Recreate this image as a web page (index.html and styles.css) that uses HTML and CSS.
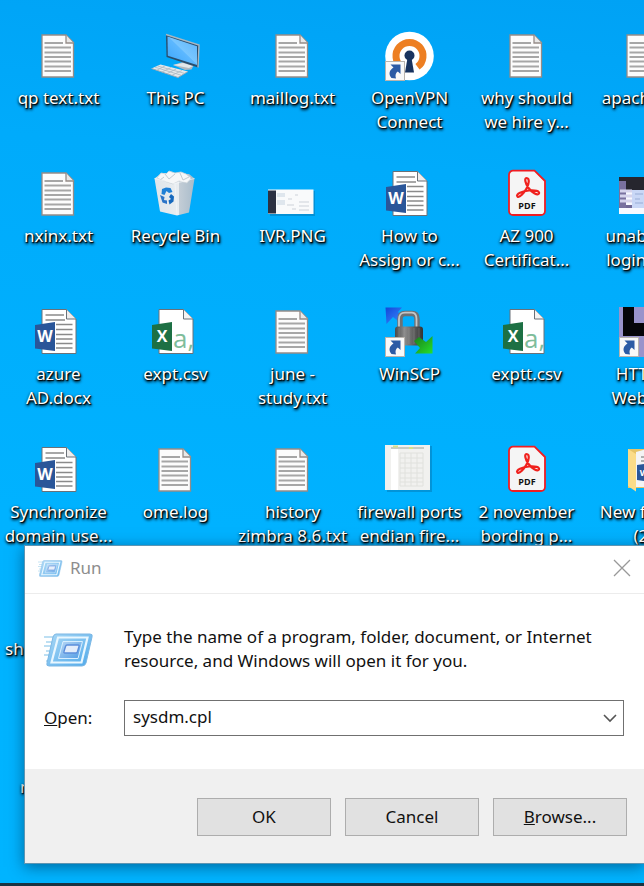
FILE: index.html
```html
<!DOCTYPE html>
<html lang="en">
<head>
<meta charset="utf-8">
<title>Desktop</title>
<link rel="stylesheet" href="styles.css">
</head>
<body>
<svg class="defs" aria-hidden="true">
  <defs>
    <linearGradient id="screen" x1="0" y1="1" x2="1" y2="0"><stop offset="0" stop-color="#3aa5fa"/><stop offset=".5" stop-color="#5db8ff"/><stop offset=".52" stop-color="#78c6ff"/><stop offset="1" stop-color="#5ab4fb"/></linearGradient>
    <linearGradient id="bin" x1="0" y1="0" x2="1" y2="0"><stop offset="0" stop-color="#dfe5ea"/><stop offset=".6" stop-color="#e9edf0"/><stop offset=".62" stop-color="#c3cdd6"/><stop offset="1" stop-color="#a9bccb"/></linearGradient>
    <linearGradient id="metal" x1="0" y1="0" x2="1" y2="0"><stop offset="0" stop-color="#4b4b4b"/><stop offset=".35" stop-color="#8b8b8b"/><stop offset=".6" stop-color="#686868"/><stop offset="1" stop-color="#333"/></linearGradient>
    <linearGradient id="blue" x1="0" y1="0" x2="1" y2="1"><stop offset="0" stop-color="#1247d8"/><stop offset="1" stop-color="#3b8bff"/></linearGradient>
    <linearGradient id="green" x1="0" y1="0" x2="1" y2="1"><stop offset="0" stop-color="#1b7d1b"/><stop offset="1" stop-color="#25e02c"/></linearGradient>
    <linearGradient id="frame" x1="0" y1="0" x2="1" y2="1"><stop offset="0" stop-color="#a9d8f6"/><stop offset="1" stop-color="#4fa9ea"/></linearGradient>
    <linearGradient id="pane" x1="0" y1="0" x2="1" y2="1"><stop offset="0" stop-color="#b9d8f5"/><stop offset="1" stop-color="#4f9be4"/></linearGradient>
    <symbol id="arrow" viewBox="0 0 20 20">
      <rect x=".5" y=".5" width="19" height="19" fill="#f9f9f9" stroke="#b9b4ae"/>
      <path d="M5.500 3.500H15.500V13L12.800 10.500C10.500 12 10 14.500 11 17.500L6.500 17C3 13 4.500 9 8.500 6.500Z" fill="#2c5ba5"/>
    </symbol>
    <symbol id="txt" viewBox="0 0 49 48">
      <path d="M8 4H32L39.500 11.500V46H8Z" fill="#fcfcfc" stroke="#958c88" stroke-width="1.300"/>
      <path d="M32 4V12H39.500" fill="#e8e8e8" stroke="#958c88" stroke-width="1.300"/>
      <path d="M10.500 12H29M10.500 16.500H37M10.500 21.500H37M10.500 26H37M10.500 30.500H37M10.500 35.500H37M10.500 40H37" stroke="#a6a6a6" stroke-width="1.900"/>
    </symbol>
    <symbol id="pc" viewBox="0 0 49 48">
      <path d="M22 34 32 31 43 34 40.500 38.500 34 39Z" fill="#aeb8c1"/>
      <path d="M22 34 32 32 42 35 38 37Z" fill="#e3e7ea"/>
      <path d="M15 3.500 48 14 47 36.500 15.500 26Z" fill="#2a4d6c"/>
      <path d="M16.500 5.500 46 15.200V34L16.800 24.700Z" fill="url(#screen)"/>
      <path d="M15 3.500 48 14 47 36.500" fill="none" stroke="#a8b7c2" stroke-width="1.400"/>
      <path d="M.5 37.500 9.500 33.500 37 40.500 27 46.500Z" fill="#e4e8eb"/>
      <path d="M.5 37.500 27 46.500 37 40.500" fill="none" stroke="#9aa9b5"/>
      <path d="M4 36.200 30 44.200M6.500 35 34 42.500M6 39.200 14 34.800M11 41 20 36.500M16 42.700 25 38M21 44.300 31 39.500" stroke="#aab7c1" stroke-width=".8"/>
    </symbol>
    <symbol id="vpn" viewBox="0 0 49 50">
      <circle cx="24.500" cy="25" r="24.300" fill="#fff"/>
      <path d="M16.500 35.800A13.500 13.500 0 1 1 32.500 35.800" fill="none" stroke="#ed7f22" stroke-width="7"/>
      <circle cx="24.500" cy="24.500" r="5" fill="#18335f"/>
      <path d="M22.500 27H26.500L29 41.500H20Z" fill="#18335f"/>
      <use href="#arrow" x="0" y="30" width="20" height="20"/>
    </symbol>
    <symbol id="recycle" viewBox="0 0 49 48">
      <path d="M3.500 9.500 11 4 38 5 43.500 9.500 38 43.500 26 46.500 9 42.500Z" fill="url(#bin)"/>
      <path d="M6 9 10 4 15 5 18 2 24 4 30 3 35 5 40 9 36 14 28 12 22 15 13 12Z" fill="#f6f7f8" stroke="#cbd3d9" stroke-width=".8"/>
      <path d="M14 5 18 10 24 5M29 4 32 11 38 8M9 11 13 8" fill="none" stroke="#c1cad1"/>
      <path d="M3.500 9.500 24 14.500 43.500 9.500M24 14.500 26 46" fill="none" stroke="#f7fafc" stroke-opacity=".6"/>
      <path d="M10.500 25 11 20 15 18.500 19.500 19 21.500 23 18 24 15.500 22 13.500 26Z" fill="#1f80d6"/>
      <path d="M9 26 13.500 28 13 31 16 31.500V35L11.500 33.500Z" fill="#2b74c8"/>
      <path d="M20 25 23 27.500 22.500 32.500 18.500 35.500 17.500 31.500 20 30 18 28Z" fill="#1669bd"/>
    </symbol>
    <symbol id="ivr" viewBox="0 0 49 48">
      <path d="M2 22H47V47H2Z" fill="#075f91" opacity=".35"/>
      <path d="M0 20.500H45.500V45H0Z" fill="#f9fafb"/>
      <path d="M0 21.500H8V44.500H0Z" fill="#2c3142"/>
      <path d="M9 24H17V28H9ZM9 31H17V36H9Z" fill="#dfe6ed"/>
      <path d="M20 30H24M27 26H30M19 36H26M31 33H41M31 37H41M31 41H41M24 40H28" stroke="#dbe0e5" stroke-width="1.500"/>
    </symbol>
    <symbol id="word" viewBox="0 0 49 48">
      <path d="M8 2.500H32.500L42 12V46.500H8Z" fill="#fff" stroke="#6b7178"/>
      <path d="M32.500 2.500V12H42" fill="#eee" stroke="#6b7178"/>
      <path d="M11.500 8H30M11.500 13H31M22 17.500H38.500M22 22.500H38.500M22 27.500H38.500M22 32H38.500M22 36.500H38.500M22 41H38.500" stroke="#8a8a8a" stroke-width="1.400"/>
      <path d="M1 18 21 15V44L1 41.500Z" fill="#2a5699"/>
      <text x="11" y="35" class="badge-letter">W</text>
    </symbol>
    <symbol id="csv" viewBox="0 0 49 48">
      <path d="M8 2.500H32.500L42 12V46.500H8Z" fill="#fff" stroke="#6b7178"/>
      <path d="M32.500 2.500V12H42" fill="#f4f4f4" stroke="#6b7178"/>
      <path d="M1 18 21 15V44L1 41.500Z" fill="#1d7044"/>
      <text x="11" y="35" class="badge-letter">X</text>
      <text x="22" y="41" class="csv-letter">a,</text>
    </symbol>
    <symbol id="pdf" viewBox="0 0 49 48">
      <path d="M11 1.700H32.500L43 12V42A4 4 0 0 1 39 46H11A4 4 0 0 1 7 42V5.700A4 4 0 0 1 11 1.700Z" fill="#f5f5f5" stroke="#f01d22" stroke-width="1.800"/>
      <path d="M24.500 9C28 9 27 15 24.500 19.500 22 24 17.500 29 15.500 27.500 13 25 21 22 27 21.500 33 21 38 22 37 24.500 35.500 27 29.500 23 26.500 19 23.500 15 22 9 24.500 9Z" fill="none" stroke="#f0211d" stroke-width="2.200"/>
      <text x="25" y="40" class="pdf-letters">PDF</text>
    </symbol>
    <symbol id="winscp" viewBox="0 0 49 50">
      <path d="M.5 .5H17L13 5 18 10 13 14 8 10 1.500 17Z" fill="url(#blue)"/>
      <path d="M15 21V12Q15 6.500 20 6.500H27Q32 6.500 32 12V21" fill="none" stroke="#6d7174" stroke-width="5.500"/>
      <path d="M14 21V12Q14 5.700 20 5.700H27Q31.500 6 31.500 12V20" fill="none" stroke="#c3c6c8" stroke-width="1.800"/>
      <rect x="10" y="19.500" width="28" height="19" rx="3" fill="url(#metal)"/>
      <path d="M14 21V37M19 21V37M24 21V37M29 21V37M34 21V37" stroke="#aaa" stroke-opacity=".3"/>
      <path d="M29 34 34 30 41 35 47.500 29V46.500H30L35 41Z" fill="url(#green)"/>
      <use href="#arrow" x="0" y="30" width="20" height="20"/>
    </symbol>
    <symbol id="shot" viewBox="0 0 49 48">
      <path d="M0 8H49V45H0Z" fill="#f8f9ff"/>
      <path d="M0 8H49V21H7V12H0Z" fill="#26262e"/>
      <path d="M0 12H7V39H0Z" fill="#79719f"/>
      <path d="M1 22H13M1 27H13M1 32H13" stroke="#d5d3ec" stroke-width="3"/>
      <path d="M13 21H49V39H13Z" fill="#c9d7f6"/>
      <path d="M16 25H24M16 30H21M16 34H24" stroke="#99add6"/>
      <path d="M7 36H13V39H7Z" fill="#716996"/>
    </symbol>
    <symbol id="http" viewBox="0 0 49 50">
      <path d="M0 0H49V50H0Z" fill="#9993cb"/>
      <path d="M4 0H15V16H49V29H4Z" fill="#050509"/>
      <use href="#arrow" x="0" y="30" width="20" height="20"/>
    </symbol>
    <symbol id="sheet" viewBox="0 0 49 48">
      <path d="M2 1H47V47H2Z" fill="#075f91" opacity=".35"/>
      <path d="M0 0H45V45H0Z" fill="#f1f1ef"/>
      <path d="M6 4H13V45H6Z" fill="#fff"/>
      <path d="M6 3H39" stroke="#b9bdb6" stroke-width="1.500"/>
      <path d="M8 1.500H13M24 3H28" stroke="#d3e08e" stroke-width="2"/>
      <path d="M15 8H38V41H15ZM20 8V41M26 8V41M32 8V41M15 13H38M15 18H38M15 23H38M15 28H38M15 33H38M15 37H38" fill="none" stroke="#e0e1dd"/>
    </symbol>
    <symbol id="folder" viewBox="0 0 49 48">
      <path d="M9 4H45V43H9Z" fill="#e7c467"/>
      <path d="M17 7 32 3V42H17Z" fill="#f3f4f5"/>
      <path d="M22 12H49M22 16H49" stroke="#999" stroke-width="1.500"/>
      <path d="M18 20 31 18V37L18 35Z" fill="#2a5699"/>
      <text x="25" y="31" class="folder-letter">W</text>
      <path d="M9 4 17 9V46.500L9 41Z" fill="#fbdc88"/>
    </symbol>
    <symbol id="run" viewBox="0 -2 50 36">
      <path d="M0 4H10M2 9H9M0 13H8M2 18H7M0 22H6M2 28H5" stroke="#a8d5ef" stroke-width="1.500"/>
      <path d="M12 1H46Q49 1 48 4L42 30Q41 33 38 33H5Q2 33 3 30L9 4Q10 1 12 1Z" fill="url(#frame)" stroke="#7cb7e4"/>
      <path d="M14 4.500H43.500L37.500 29.500H7.500Z" fill="none" stroke="#e9f7ff" stroke-width="2.200"/>
      <path d="M19 8.500H38.500L34 25.500H14.500Z" fill="url(#pane)" stroke="#d8efff"/>
      <path d="M23 12H34Q35.500 12 35 13.500L33.500 18.500Q33 20 32 20H21Q19.500 20 20 18.500L21.500 13.500Q22 12 23 12Z" fill="#e3edfb" stroke="#5c8edb" stroke-width="1.400"/>
    </symbol>
  </defs>
</svg>

<main class="desktop">
  <div class="icons">
    <div class="item"><svg class="icon"><use href="#txt"/></svg><span>qp text.txt</span></div>
    <div class="item"><svg class="icon"><use href="#pc"/></svg><span>This PC</span></div>
    <div class="item"><svg class="icon"><use href="#txt"/></svg><span>maillog.txt</span></div>
    <div class="item"><svg class="icon" viewBox="0 0 49 48"><use href="#vpn" width="49" height="50"/></svg><span>OpenVPN<br>Connect</span></div>
    <div class="item"><svg class="icon"><use href="#txt"/></svg><span>why should<br>we hire y...</span></div>
    <div class="item"><svg class="icon"><use href="#txt"/></svg><span>apache.txt</span></div>

    <div class="item"><svg class="icon"><use href="#txt"/></svg><span>nxinx.txt</span></div>
    <div class="item"><svg class="icon"><use href="#recycle"/></svg><span>Recycle Bin</span></div>
    <div class="item"><svg class="icon"><use href="#ivr"/></svg><span>IVR.PNG</span></div>
    <div class="item"><svg class="icon"><use href="#word"/></svg><span>How to<br>Assign or c...</span></div>
    <div class="item"><svg class="icon"><use href="#pdf"/></svg><span>AZ 900<br>Certificat...</span></div>
    <div class="item"><svg class="icon"><use href="#shot"/></svg><span>unable to<br>login to...</span></div>

    <div class="item"><svg class="icon"><use href="#word"/></svg><span>azure<br>AD.docx</span></div>
    <div class="item"><svg class="icon"><use href="#csv"/></svg><span>expt.csv</span></div>
    <div class="item"><svg class="icon"><use href="#txt"/></svg><span>june -<br>study.txt</span></div>
    <div class="item"><svg class="icon" viewBox="0 0 49 48"><use href="#winscp" width="49" height="50"/></svg><span>WinSCP</span></div>
    <div class="item"><svg class="icon"><use href="#csv"/></svg><span>exptt.csv</span></div>
    <div class="item"><svg class="icon" viewBox="0 0 49 48"><use href="#http" width="49" height="50"/></svg><span>HTTrac<br>Website</span></div>

    <div class="item"><svg class="icon"><use href="#word"/></svg><span>Synchronize<br>domain use...</span></div>
    <div class="item"><svg class="icon"><use href="#txt"/></svg><span>ome.log</span></div>
    <div class="item"><svg class="icon"><use href="#txt"/></svg><span>history<br>zimbra 8.6.txt</span></div>
    <div class="item"><svg class="icon"><use href="#sheet"/></svg><span>firewall ports<br>endian fire...</span></div>
    <div class="item"><svg class="icon"><use href="#pdf"/></svg><span>2 november<br>bording p...</span></div>
    <div class="item"><svg class="icon"><use href="#folder"/></svg><span>New folder<br>(2)</span></div>

    <div class="item covered"><span>sh</span></div>
    <div class="item covered short"><span>n</span></div>
  </div>

  <section class="dialog" role="dialog" aria-labelledby="run-title">
    <header class="titlebar">
      <svg class="run-small"><use href="#run"/></svg>
      <h1 id="run-title">Run</h1>
      <button class="close" type="button" aria-label="Close"><svg viewBox="0 0 18 18"><path d="M1 1 17 17M17 1 1 17"/></svg></button>
    </header>
    <form>
      <div class="content">
        <svg class="run-large"><use href="#run"/></svg>
        <p>Type the name of a program, folder, document, or Internet resource, and Windows will open it for you.</p>
        <label for="command"><u>O</u>pen:</label>
        <div class="combo">
          <input id="command" type="text" value="sysdm.cpl">
          <button type="button" aria-label="Show history"><svg viewBox="0 0 14 9"><path d="M1 1 7 7 13 1"/></svg></button>
        </div>
      </div>
      <footer class="actions">
        <button type="button">OK</button>
        <button type="button">Cancel</button>
        <button type="button"><u>B</u>rowse...</button>
      </footer>
    </form>
  </section>
  <div class="taskbar"></div>
</main>
</body>
</html>
```
FILE: styles.css
```css
* { box-sizing: border-box; }

body {
  margin: 0;
  font: 17px/24px "Noto Sans", "Open Sans", sans-serif;
  color: #111;
}

.defs { position: absolute; width: 0; height: 0; }

.desktop {
  position: relative;
  display: flex;
  flex-direction: column;
  min-height: 100vh;
  overflow: hidden;
  background: linear-gradient(185deg, #00a2f5 0, #00abfb 20%, #00b2ff 60%, #00b4ff 100%);
}

/* Icon grid */
.icons {
  flex: 1;
  display: grid;
  grid-template-columns: repeat(6, 117px);
  grid-auto-rows: 138px;
  height: 0;
  padding-top: 31px;
}

.item {
  display: flex;
  flex-direction: column;
  align-items: center;
  gap: 7px;
  color: #fff;
  text-align: center;
  white-space: nowrap;
  text-shadow: 1px 1px 1px #000, 1px 2px 3px #000, 0 1px 3px rgba(0, 0, 0, .7);
}

.icon { flex: none; width: 49px; height: 48px; overflow: visible; }

.covered { grid-column: 1; align-items: flex-start; padding: 54px 0 0 5px; }
.short { padding-left: 20px; }

.badge-letter { font: 700 16px "Open Sans", sans-serif; fill: #fff; text-anchor: middle; text-shadow: none; }
.csv-letter { font: 26px "Open Sans", sans-serif; fill: #7fbd9b; text-shadow: none; }
.pdf-letters { font: 700 9px "Open Sans", sans-serif; fill: #111; text-anchor: middle; text-shadow: none; }
.folder-letter { font: 700 9px "Open Sans", sans-serif; fill: #fff; text-anchor: middle; text-shadow: none; }

/* Run window */
.dialog {
  position: absolute;
  left: 24px;
  right: 0;
  bottom: 22px;
  border: 1px solid #5d95b3;
  border-right: 0;
  background: #fff;
  box-shadow: 0 3px 14px rgba(0, 30, 60, .5);
}

.titlebar {
  display: flex;
  align-items: center;
  gap: 7px;
  height: 48px;
  padding: 0 13px 4px;
  border-bottom: 1px solid #ececec;
}

.titlebar h1 { margin: 0; font-size: 17px; font-weight: 400; color: #8d8d8d; }
.run-small { width: 25px; height: 18px; opacity: .85; }

button { font: inherit; color: inherit; }

.close {
  display: flex;
  margin-left: auto;
  padding: 0;
  border: 0;
  background: none;
}

.close svg { width: 18px; height: 18px; fill: none; stroke: #999; stroke-width: 1.3; }

.content {
  display: grid;
  grid-template-columns: 80px 1fr;
  align-items: center;
  row-gap: 27px;
  padding: 31px 20px 33px 19px;
}

.content p { margin: 0; }
.run-large { width: 50px; height: 36px; }

.combo {
  display: flex;
  align-items: center;
  height: 36px;
  border: 1px solid #707070;
  background: #fff;
}

.combo input {
  flex: 1;
  min-width: 0;
  padding: 0 8px 2px;
  border: 0;
  outline: 0;
  background: none;
  font: inherit;
  color: inherit;
}

.combo button { display: flex; padding: 0 6px; border: 0; background: none; }
.combo svg { width: 14px; height: 9px; fill: none; stroke: #555; stroke-width: 1.6; }

.actions {
  display: flex;
  justify-content: flex-end;
  gap: 14px;
  padding: 29px 17px 27px;
  background: #f0f0f0;
}

.actions button {
  width: 134px;
  height: 38px;
  padding: 0;
  border: 1px solid #adadad;
  background: #e1e1e1;
}

.taskbar { height: 3px; background: #1b3442; }
```
